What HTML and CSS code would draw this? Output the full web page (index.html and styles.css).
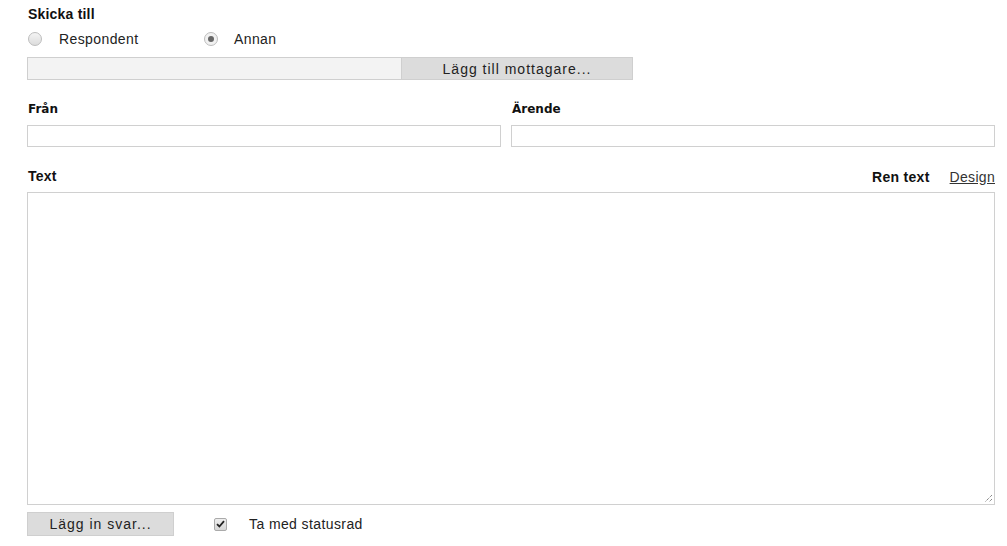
FILE: index.html
```html
<!DOCTYPE html>
<html lang="sv">
<head>
<meta charset="utf-8">
<title>Skicka</title>
<link rel="stylesheet" href="styles.css">
</head>
<body>
<div class="page">
  <div class="label label-top">Skicka till</div>
  <div class="radios">
    <label class="radio-opt"><span class="radio"></span><span class="opt-text">Respondent</span></label>
    <label class="radio-opt"><span class="radio checked"></span><span class="opt-text">Annan</span></label>
  </div>
  <div class="recipient-row">
    <div class="recipient-field"></div>
    <div class="btn btn-add">Lägg till mottagare...</div>
  </div>

  <div class="two-col">
    <div class="col col-from">
      <div class="label label-alt">Från</div>
      <div class="input"></div>
    </div>
    <div class="col col-subject">
      <div class="label label-alt">Ärende</div>
      <div class="input"></div>
    </div>
  </div>

  <div class="text-head">
    <div class="label">Text</div>
    <div class="modes">
      <span class="mode-active">Ren text</span>
      <span class="mode-link">Design</span>
    </div>
  </div>
  <div class="textarea">
    <svg class="grip" width="10" height="10" viewBox="0 0 10 10">
      <path d="M9 2 L2 9 M9 6 L6 9" stroke="#555" stroke-width="1" stroke-dasharray="1 1" fill="none"/>
    </svg>
  </div>

  <div class="bottom-row">
    <div class="btn btn-answer">Lägg in svar...</div>
    <label class="check-opt">
      <span class="checkbox">
        <svg width="9" height="8" viewBox="0 0 9 8"><path d="M1 4.2 L3.4 6.5 L8 1.2" stroke="#222" stroke-width="1.8" fill="none"/></svg>
      </span>
      <span class="opt-text">Ta med statusrad</span>
    </label>
  </div>
</div>
</body>
</html>
```

FILE: styles.css
```css
* { box-sizing: border-box; }
html, body { margin: 0; padding: 0; background: #fff; }
body {
  font-family: "Liberation Sans", Arial, sans-serif;
  font-size: 14px;
  color: #222;
}
.page {
  width: 968px;
  margin-left: 27px;
  padding-top: 6px;
}
.label {
  font-weight: bold;
  font-size: 14px;
  line-height: 17px;
  color: #111;
  padding-left: 1px;
  letter-spacing: 0.2px;
}
.label-alt {
  font-family: "DejaVu Sans", Tahoma, sans-serif;
  font-size: 12px;
  letter-spacing: 0;
}
.radios {
  display: flex;
  height: 21px;
  align-items: center;
  margin-top: 5px;
}
.radio-opt {
  display: flex;
  align-items: center;
}
.radio-opt:first-child { width: 176px; }
.radio {
  width: 14px;
  height: 14px;
  border-radius: 50%;
  border: 1px solid #bdbdbd;
  background: linear-gradient(#f4f4f4, #dcdcdc);
  margin-left: 1px;
  margin-right: 16px;
  position: relative;
}
.radio-opt:first-child .radio { margin-right: 17px; }
.radio.checked {
  background: #f1f1f1;
}
.radio.checked::after {
  content: "";
  position: absolute;
  left: 3px;
  top: 3px;
  width: 6px;
  height: 6px;
  border-radius: 50%;
  background: #666;
}
.opt-text { color: #222; letter-spacing: 0.4px; }
.recipient-row {
  display: flex;
  margin-top: 8px;
  height: 23px;
}
.recipient-field {
  width: 375px;
  background: #f3f3f3;
  border: 1px solid #cfcfcf;
}
.btn {
  background: #dcdcdc;
  border: 1px solid #cfcfcf;
  display: flex;
  align-items: center;
  justify-content: center;
  color: #222;
  letter-spacing: 1px;
}
.btn-add { width: 231px; border-left: none; }
.two-col {
  display: flex;
  gap: 10px;
  margin-top: 21px;
}
.col-from { width: 474px; flex: none; }
.col-subject { flex: 1; }
.col .label { margin-bottom: 7px; }
.input {
  height: 22px;
  border: 1px solid #d0d0d0;
  background: #fff;
}
.text-head {
  display: flex;
  justify-content: space-between;
  align-items: center;
  margin-top: 21px;
}
.modes { display: flex; gap: 20px; }
.mode-active { font-weight: bold; color: #111; letter-spacing: 0.3px; }
.mode-link { text-decoration: underline; color: #333; letter-spacing: 0.3px; }
.textarea {
  margin-top: 7px;
  height: 313px;
  border: 1px solid #d0d0d0;
  position: relative;
}
.grip { position: absolute; right: 1px; bottom: 1px; }
.bottom-row {
  display: flex;
  align-items: center;
  margin-top: 7px;
}
.btn-answer { width: 147px; height: 24px; }
.check-opt {
  display: flex;
  align-items: center;
  margin-left: 40px;
}
.checkbox {
  width: 13px;
  height: 13px;
  border: 1px solid #aaa;
  border-radius: 2px;
  background: linear-gradient(#eee, #d6d6d6);
  display: flex;
  align-items: center;
  justify-content: center;
  margin-right: 22px;
}
```
